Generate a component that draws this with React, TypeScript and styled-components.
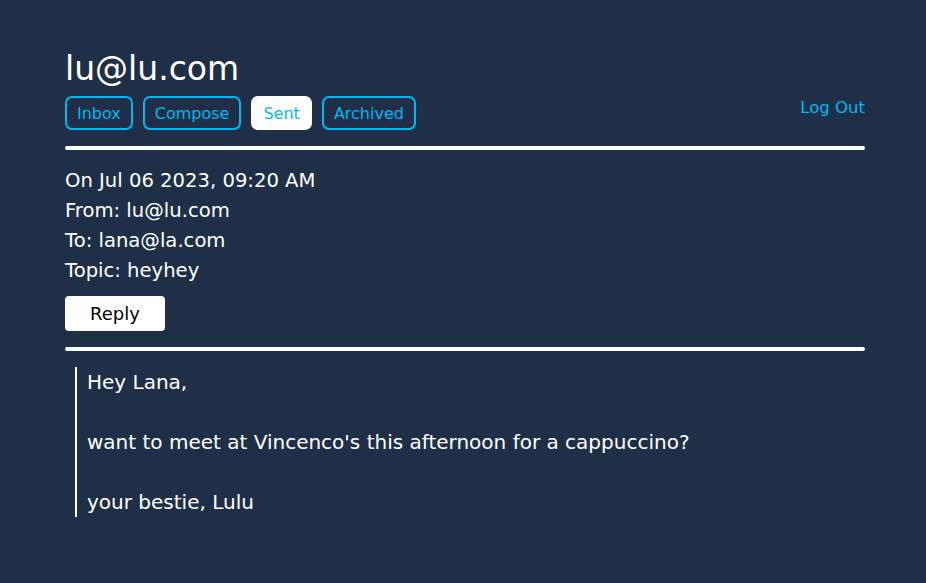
import React from "react";
import styled, { createGlobalStyle } from "styled-components";

const Global = createGlobalStyle`
  html, body { margin: 0; padding: 0; background: #1f2f48; }
  body { font-family: "DejaVu Sans", "Open Sans", sans-serif; color: #ffffff; }
`;

const Page = styled.div`
  min-height: 583px;
  background: #1f2f48;
  padding: 49px 61px 0 65px;
  box-sizing: border-box;
`;

const Title = styled.h1`
  margin: 0;
  font-size: 33px;
  font-weight: 400;
  line-height: 40px;
`;

const NavRow = styled.div`
  display: flex;
  align-items: center;
  justify-content: space-between;
  margin-top: 7px;
`;

const Tabs = styled.div`
  display: flex;
  gap: 10px;
`;

const Tab = styled.button<{ $active?: boolean }>`
  height: 34px;
  padding: 0 10px;
  border: 2px solid ${(p) => (p.$active ? "#ffffff" : "#00b8f5")};
  border-radius: 7px;
  background: ${(p) => (p.$active ? "#ffffff" : "transparent")};
  color: #00b8f5;
  font-family: inherit;
  font-size: 16px;
  cursor: pointer;
`;

const LogOut = styled.a`
  color: #00b8f5;
  font-size: 16.5px;
  align-self: flex-start;
  margin-top: 2px;
  cursor: pointer;
`;

const Rule = styled.hr`
  margin: 16px 0 0;
  border: none;
  height: 4px;
  border-radius: 2px;
  background: #ffffff;
`;

const Meta = styled.div`
  margin-top: 16px;
  font-size: 19.6px;
  line-height: 30px;
`;

const ReplyButton = styled.button`
  margin-top: 10px;
  width: 100px;
  height: 35px;
  border: none;
  border-radius: 4px;
  background: #ffffff;
  color: #000000;
  font-family: inherit;
  font-size: 18px;
  cursor: pointer;
`;

const Quote = styled.blockquote`
  margin: 16px 0 0 10px;
  padding: 0 0 0 10px;
  border-left: 2px solid #ffffff;
  font-size: 20px;
  line-height: 30px;
`;

const Blank = styled.div`
  height: 30px;
`;

export default function App() {
  return (
    <>
      <Global />
      <Page>
        <Title>lu@lu.com</Title>
        <NavRow>
          <Tabs>
            <Tab>Inbox</Tab>
            <Tab>Compose</Tab>
            <Tab $active>Sent</Tab>
            <Tab>Archived</Tab>
          </Tabs>
          <LogOut>Log Out</LogOut>
        </NavRow>
        <Rule />
        <Meta>
          <div>On Jul 06 2023, 09:20 AM</div>
          <div>From: lu@lu.com</div>
          <div>To: lana@la.com</div>
          <div>Topic: heyhey</div>
        </Meta>
        <ReplyButton>Reply</ReplyButton>
        <Rule />
        <Quote>
          <div>Hey Lana,</div>
          <Blank />
          <div>want to meet at Vincenco's this afternoon for a cappuccino?</div>
          <Blank />
          <div>your bestie, Lulu</div>
        </Quote>
      </Page>
    </>
  );
}
